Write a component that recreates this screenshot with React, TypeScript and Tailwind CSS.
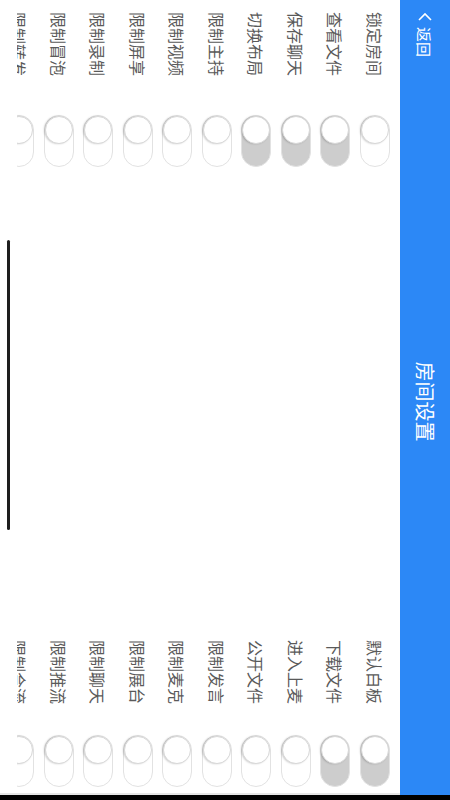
import type { ReactNode } from 'react'

type Item = { label: string; on: boolean }

const left: Item[] = [
  { label: '锁定房间', on: false },
  { label: '查看文件', on: true },
  { label: '保存聊天', on: true },
  { label: '切换布局', on: true },
  { label: '限制主持', on: false },
  { label: '限制视频', on: false },
  { label: '限制屏享', on: false },
  { label: '限制录制', on: false },
  { label: '限制冒泡', on: false },
  { label: '限制转发', on: false },
]

const right: Item[] = [
  { label: '默认白板', on: true },
  { label: '下载文件', on: true },
  { label: '进入上麦', on: false },
  { label: '公开文件', on: false },
  { label: '限制发言', on: false },
  { label: '限制麦克', on: false },
  { label: '限制展台', on: false },
  { label: '限制聊天', on: false },
  { label: '限制推流', on: false },
  { label: '限制合流', on: false },
]

function Switch({ on }: { on: boolean }) {
  return (
    <span
      className={`flex h-[30px] w-[52px] shrink-0 items-center rounded-full border border-[#e2e2e2] ${
        on ? 'bg-[#cdcdcd]' : 'bg-white'
      }`}
    >
      <span className="h-[28px] w-[28px] rounded-full border border-[#d8d8d8] bg-white shadow-[0_1px_2px_rgba(0,0,0,0.2)]" />
    </span>
  )
}

function Cell({ item, labelWidth }: { item: Item; labelWidth: string }): ReactNode {
  return (
    <div className="flex items-center">
      <span className={`${labelWidth} text-[16px] leading-none text-[#5a5a5a]`}>{item.label}</span>
      <Switch on={item.on} />
    </div>
  )
}

export default function App() {
  return (
    <div className="relative h-[800px] w-[450px] overflow-hidden bg-white font-['Noto_Sans_CJK_SC','Noto_Sans',sans-serif]">
      {/* landscape screen, turned a quarter clockwise */}
      <div className="flex h-[450px] w-[800px] origin-top-left translate-x-[450px] rotate-90">
        <div className="flex w-[795px] flex-col">
          <header className="grid h-[50px] shrink-0 grid-cols-[1fr_auto_1fr] items-center bg-[#2c88f6] text-white">
            <div className="flex items-center gap-[5px] pl-[12px]">
              <svg width="10" height="14" viewBox="0 0 10 14" fill="none">
                <path d="M8 1L2 7l6 6" stroke="white" strokeWidth="1.6" />
              </svg>
              <span className="text-[15px] leading-none">返回</span>
            </div>
            <h1 className="pl-[8px] text-[20px] leading-none">房间设置</h1>
            <div />
          </header>

          <div className="relative flex-1 border-r-2 border-[#e6e6e6]">
            <div className="h-[383px] overflow-hidden pt-[5.5px]">
              {left.map((item, i) => (
                <div key={item.label} className="flex h-[39.5px] items-center justify-between pl-[12px] pr-[6px]">
                  <Cell item={item} labelWidth="w-[103px]" />
                  <Cell item={right[i]} labelWidth="w-[95px]" />
                </div>
              ))}
            </div>
            <div className="absolute left-[240px] top-[390px] h-[3px] w-[290px] rounded-full bg-[#1e1e1e]" />
          </div>
        </div>
        <div className="w-[5px] bg-black" />
      </div>
    </div>
  )
}
